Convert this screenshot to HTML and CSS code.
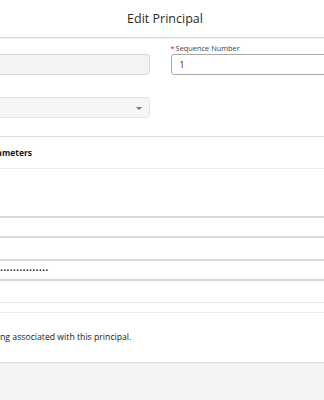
FILE: index.html
```html
<!DOCTYPE html>
<html lang="en">
<head>
  <meta charset="UTF-8" />
  <meta name="viewport" content="width=device-width, initial-scale=1.0"/>
  <title>Edit Principal</title>
  <link rel="stylesheet" href="styles.css">
</head>
<body>
  <div class="modal">
    <header class="modal-header">
      <h2>Edit Principal</h2>
    </header>

    <div class="modal-body">
      <div class="form-grid">
        <div class="field">
          <label><abbr>*</abbr>Parameter Name</label>
          <input type="text" value="" disabled />
        </div>
        <div class="field">
          <label><abbr>*</abbr>Sequence Number</label>
          <input type="text" value="1" />
        </div>
        <div class="field">
          <label>Identity Type</label>
          <div class="select-wrap">
            <select disabled>
              <option></option>
            </select>
            <span class="arrow"></span>
          </div>
        </div>
      </div>

      <section class="section">
        <h3 class="section-title">Authentication Parameters</h3>
        <div class="param-list">
          <div class="param-row">
            <label>Username</label>
            <input type="text" value="" />
          </div>
          <div class="param-row">
            <label>Password</label>
            <input type="password" value="passwordpasswordpass" />
          </div>
        </div>
      </section>

      <section class="section section-mapping">
        <p class="empty-msg">There is no external credential mapping associated with this principal.</p>
      </section>
    </div>

    <footer class="modal-footer"></footer>
  </div>
</body>
</html>
```

FILE: styles.css
```css
html, body {
  margin: 0;
  padding: 0;
  background-color: #ffffff;
  overflow: hidden;
}

body {
  font-family: "Open Sans", Arial, sans-serif;
  color: #181818;
  width: 324px;
  height: 400px;
}

.modal {
  width: 640px;
  margin-left: -160px;
  background-color: #ffffff;
}

.modal-header {
  height: 37px;
  border-bottom: 1px solid #dddbda;
  box-shadow: 0 1px 1px rgba(0, 0, 0, 0.06);
  padding-left: 10px;
  display: flex;
  align-items: center;
  justify-content: center;
}
.modal-header h2 {
  margin: 0;
  font-size: 12.5px;
  font-weight: 400;
  color: #2b2b2b;
}

.modal-body {
  padding: 5px 16px 0;
}

.form-grid {
  display: grid;
  grid-template-columns: 1fr 1fr;
  column-gap: 21px;
  row-gap: 11px;
}
.field label {
  display: block;
  height: 11px;
  font-size: 7.4px;
  line-height: 11px;
  color: #444444;
}
.field abbr {
  color: #ea001e;
  text-decoration: none;
  margin-right: 1px;
}
.field input,
.field select {
  display: block;
  box-sizing: border-box;
  width: 100%;
  height: 21px;
  margin: 0;
  padding: 0 8px;
  border: 1px solid #a9a9a9;
  border-radius: 3px;
  font-family: inherit;
  font-size: 8.5px;
  color: #181818;
  background-color: #ffffff;
}
.field input:disabled,
.field select:disabled {
  background-color: #f3f3f3;
  border-color: #d8d8d8;
}
.field select {
  appearance: none;
}
.select-wrap {
  position: relative;
}
.select-wrap .arrow {
  position: absolute;
  right: 8px;
  top: 10px;
  width: 0;
  height: 0;
  border-left: 3px solid transparent;
  border-right: 3px solid transparent;
  border-top: 3px solid #747474;
}

.section {
  margin-top: 18px;
  margin-left: -16px;
  margin-right: -16px;
}
.section-title {
  margin: 0;
  height: 31px;
  padding-left: 76px;
  border-top: 1px solid #dddbda;
  border-bottom: 1px solid #ececec;
  font-size: 8.5px;
  font-weight: 700;
  line-height: 31px;
}

.param-list {
  padding: 47px 0 0 16px;
}
.param-row {
  display: flex;
  align-items: center;
  margin-bottom: 21px;
}
.param-row label {
  width: 120px;
  font-size: 8.5px;
  color: #444444;
}
.param-row input {
  flex: 1;
  box-sizing: border-box;
  height: 22px;
  margin: 0;
  padding: 0 8px;
  border: none;
  border-top: 2px solid #d8d8d8;
  border-bottom: 2px solid #d8d8d8;
  font-family: inherit;
  font-size: 7px;
  letter-spacing: 0.6px;
  color: #181818;
}

.section-mapping {
  margin-top: 3px;
  border-top: 1px solid #ececec;
  padding-top: 9px;
  border-bottom: 1px solid #dddbda;
}
.empty-msg {
  margin: 0;
  height: 49px;
  border-top: 1px solid #ececec;
  padding-left: 9px;
  font-size: 8.7px;
  line-height: 48px;
  color: #181818;
}

.modal-footer {
  height: 60px;
  background-color: #f3f3f3;
}
```
